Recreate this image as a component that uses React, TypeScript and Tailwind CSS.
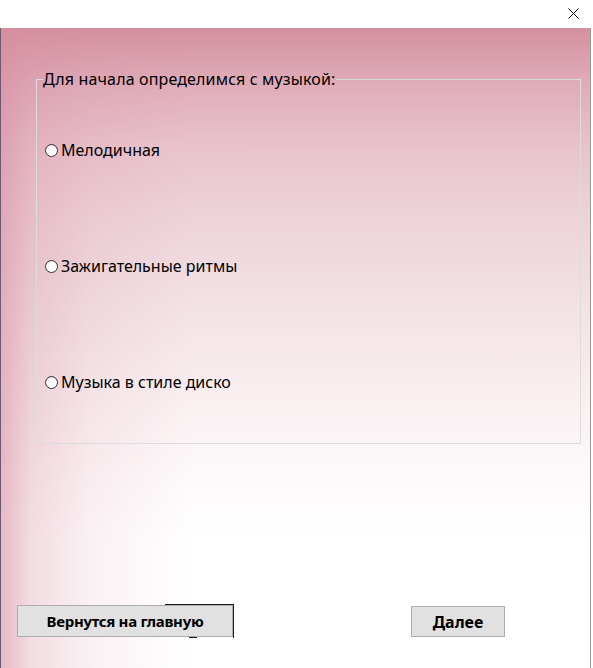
import React from "react";

const font = { fontFamily: '"Noto Sans", "Open Sans", sans-serif' };

function Radio({ label }: { label: string }) {
  return (
    <label className="flex items-center h-[20px] text-[16px] text-black leading-[20px]">
      <span className="w-[13px] h-[13px] rounded-full border border-[#333333] bg-white shadow-[inset_0_1px_1px_rgba(0,0,0,0.15)]" />
      <span className="ml-[3px]">{label}</span>
    </label>
  );
}

export default function App() {
  return (
    <div className="w-[593px] h-[668px] bg-white flex flex-col overflow-hidden" style={font}>
      <div className="h-[28px] flex items-center justify-end pr-[14px] bg-white shrink-0">
        <svg width="11" height="11" viewBox="0 0 11 11" className="mt-[-2px]">
          <path d="M0.5 0.5 L10.5 10.5 M10.5 0.5 L0.5 10.5" stroke="#000" strokeWidth="1" />
        </svg>
      </div>
      <div className="flex-1 w-[591px] flex flex-col border-l border-l-[#6e5a6f] border-r border-r-[#9a9a9a] bg-[linear-gradient(to_right,rgba(214,140,160,0.6)_0px,rgba(214,140,160,0.3)_30px,rgba(214,140,160,0.12)_90px,rgba(214,140,160,0)_190px),linear-gradient(to_bottom,#d3909f_0%,#dfaab7_8%,#e8c2cb_18%,#eed3d9_30%,#f3e2e6_44%,#f9eff1_58%,#fdf9fa_70%,#ffffff_80%)]">
        <fieldset className="mt-[41px] ml-[35px] w-[545px] h-[375px] border border-[#dcdcdc] pl-[8px] pr-0 pb-0 pt-0 m-0">
          <legend className="text-[16px] leading-[20px] text-black px-0 ml-[-2px] tracking-[0.15px]">
            Для начала определимся с музыкой:
          </legend>
          <div className="flex flex-col gap-[96px] mt-[51px]">
            <Radio label="Мелодичная" />
            <Radio label="Зажигательные ритмы" />
            <Radio label="Музыка в стиле диско" />
          </div>
        </fieldset>
        <div className="mt-auto mb-[31px] flex items-end">
          <div className="relative ml-[16px]">
            <div className="absolute right-[-1px] top-[-1px] h-[34px] w-[69px] border-t border-r border-[#1a1a1a]" />
            <div className="absolute left-[172px] bottom-[-1px] h-[1px] w-[8px] bg-[#1a1a1a]" />
            <button className="relative w-[216px] h-[32px] bg-[#e1e1e1] border border-[#adadad] text-[15px] font-bold text-black leading-none tracking-[-0.3px]">
              Вернутся на главную
            </button>
          </div>
          <button className="ml-[178px] w-[94px] h-[31px] bg-[#e1e1e1] border border-[#adadad] text-[16px] font-bold text-black leading-none">
            Далее
          </button>
        </div>
      </div>
    </div>
  );
}
